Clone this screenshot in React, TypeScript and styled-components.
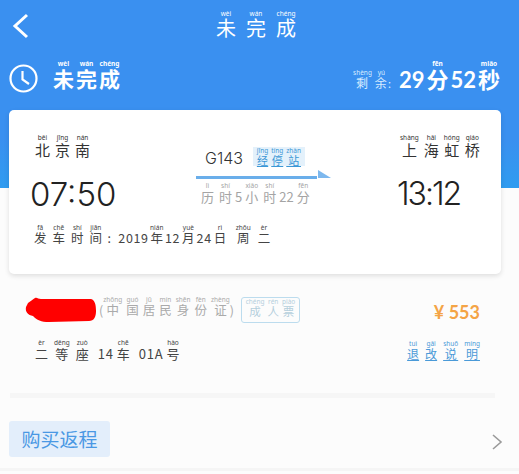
import React from "react";
import styled, { createGlobalStyle } from "styled-components";

const GlobalStyle = createGlobalStyle`
  html, body {
    margin: 0;
    padding: 0;
    background: #fcfcfc;
  }
  * {
    box-sizing: border-box;
  }
`;

const Page = styled.div`
  width: 519px;
  height: 474px;
  overflow: hidden;
  font-family: "Noto Sans CJK SC", "Noto Sans", sans-serif;
  background: linear-gradient(#3a90f0 0, #3a90f0 140px, #2f9cf0 188px, #fcfcfc 188px);
`;

const TopBar = styled.div`
  height: 52px;
  padding-left: 11px;
  display: flex;
  align-items: center;
  justify-content: flex-start;
  gap: 185px;
`;

const Title = styled.div`
  color: #fff;
  font-size: 20px;
  line-height: 34px;
  margin-top: 4px;
`;

const StatusRow = styled.div`
  height: 58px;
  padding: 8px 19px 0 9px;
  display: flex;
  align-items: flex-start;
  justify-content: space-between;
  color: #fff;
`;

const StatusLeft = styled.div`
  display: flex;
  align-items: center;
  gap: 15px;
  font-size: 21px;
  font-weight: 700;
  line-height: 34px;
`;

const Countdown = styled.div`
  display: flex;
  align-items: baseline;
  gap: 2px;
  font-size: 22px;
  font-weight: 700;
  line-height: 34px;
  font-family: "Lato", "Noto Sans CJK SC", sans-serif;
`;

const CountdownLabel = styled.span`
  font-size: 12px;
  font-weight: 400;
  color: #d8ecff;
  margin-right: 5px;
  letter-spacing: 1px;
`;

const Card = styled.div`
  width: 492px;
  height: 164px;
  margin-left: 9px;
  padding: 24px 25px 0 22px;
  background: #fff;
  border-radius: 5px;
  box-shadow: 0 2px 5px rgba(0, 0, 0, 0.12);
  color: #333;
`;

const RouteRow = styled.div`
  display: flex;
  justify-content: space-between;
  align-items: flex-start;
  height: 90px;
`;

const Station = styled.div<{ $right?: boolean }>`
  display: flex;
  flex-direction: column;
  align-items: flex-start;
  padding-left: 4px;
  width: ${(p) => (p.$right ? "80px" : "86px")};
`;

const StationName = styled.div`
  font-size: 15px;
  line-height: 26px;
  color: #333;
  white-space: nowrap;
`;

const Time = styled.div<{ $right?: boolean }>`
  margin-top: 13px;
  margin-left: ${(p) => (p.$right ? "-3px" : "-5px")};
  font-family: "Inter", sans-serif;
  font-size: ${(p) => (p.$right ? "32px" : "33px")};
  font-weight: 300;
  line-height: 34px;
  letter-spacing: ${(p) => (p.$right ? "-2px" : "0")};
  color: #222;
  white-space: nowrap;
`;

const Middle = styled.div`
  width: 135px;
  margin-left: 14px;
  padding-top: 11px;
  display: flex;
  flex-direction: column;
`;

const TrainRow = styled.div`
  display: flex;
  align-items: center;
  height: 22px;
  padding-left: 9px;
  gap: 10px;
`;

const TrainNo = styled.span`
  font-family: "Inter", sans-serif;
  font-size: 16px;
  font-weight: 300;
  color: #333;
  margin-top: 4px;
`;

const StopsTag = styled.span`
  width: 52px;
  height: 19px;
  background: #e4f1fb;
  color: #3b97d6;
  font-size: 11px;
  line-height: 19px;
  text-align: center;
  text-decoration: underline;
  white-space: nowrap;
`;

const Arrow = styled.svg`
  display: block;
  margin-top: 3px;
`;

const Duration = styled.div`
  margin: 2px 0 0 5px;
  font-size: 13px;
  line-height: 22px;
  color: #a4a4a4;
  white-space: nowrap;
`;

const Digits = styled.span`
  margin: 0 3px;
`;

const DepartLine = styled.div`
  margin-left: 3px;
  font-size: 12.5px;
  line-height: 24px;
  color: #444;
  white-space: nowrap;
`;

const DateDigits = styled.span`
  margin: 0 2px;
  letter-spacing: 0.6px;
`;

const Ticket = styled.div`
  height: 102px;
  margin: 22px 24px 0 10px;
  padding: 0 15px;
  border-bottom: 5px solid #f6f6f6;
`;

const TicketRow = styled.div`
  display: flex;
  align-items: center;
  justify-content: space-between;
`;

const Passenger = styled.div`
  display: flex;
  align-items: center;
`;

const IdType = styled.span`
  font-size: 12.5px;
  line-height: 26px;
  color: #aaa;
  white-space: nowrap;
`;

const Paren = styled.span`
  margin: 0 2px;
`;

const TicketKind = styled.span`
  width: 59px;
  height: 26px;
  margin-left: 5px;
  border: 1.5px solid #bcdcee;
  border-radius: 3px;
  color: #b5cfdc;
  font-size: 11.5px;
  line-height: 23px;
  text-align: center;
  white-space: nowrap;
`;

const Price = styled.span`
  margin-top: 4px;
  font-family: "Lato", sans-serif;
  font-size: 18px;
  font-weight: 700;
  color: #f4a446;
`;

const SeatRow = styled(TicketRow)`
  margin-top: 15px;
  padding-left: 10px;
`;

const Seat = styled.span`
  font-size: 13px;
  line-height: 22px;
  color: #444;
  white-space: nowrap;
`;

const SeatDigits = styled.span`
  margin: 0 3px 0 9px;
  letter-spacing: 0.8px;
`;

const RefundLink = styled.span`
  font-size: 12px;
  line-height: 22px;
  color: #4a9ad8;
  text-decoration: underline;
  white-space: nowrap;
`;

const ReturnRow = styled.div`
  height: 73px;
  padding: 23px 16px 0 9px;
  display: flex;
  justify-content: space-between;
  align-items: flex-start;
  border-bottom: 3px solid #f5f5f5;
`;

const ReturnButton = styled.div`
  width: 101px;
  height: 36px;
  background: #e3eefb;
  border-radius: 3px;
  color: #4a98e4;
  font-size: 19px;
  line-height: 36px;
  text-align: center;
`;

const Chevron = styled.svg`
  margin-top: 12px;
`;

// latin primary font keeps the annotation close to the han glyph
const Char = styled.ruby<{ $gap: number }>`
  font-family: "Liberation Sans", "Noto Sans CJK SC", sans-serif;
  margin-right: ${(p) => p.$gap}px;
`;

const Rt = styled.rt`
  font-size: 6.5px;
  font-weight: inherit;
  line-height: 7px;
  letter-spacing: 0;
  font-family: "Noto Sans", sans-serif;
`;

const Py: React.FC<{ items: [string, string][]; gap?: number }> = ({ items, gap = 0 }) => (
  <>
    {items.map(([han, pin], i) => (
      <Char key={i} $gap={i < items.length - 1 ? gap : 0}>
        {han}
        <Rt>{pin}</Rt>
      </Char>
    ))}
  </>
);

const App: React.FC = () => {
  return (
    <Page>
      <GlobalStyle />
      <TopBar>
        <svg width="20" height="26" viewBox="0 0 20 26" fill="none">
          <path d="M16 2 L4 13 L16 24" stroke="#fff" strokeWidth="3" />
        </svg>
        <Title>
          <Py
            gap={10}
            items={[
              ["未", "wèi"],
              ["完", "wán"],
              ["成", "chéng"],
            ]}
          />
        </Title>
      </TopBar>
      <StatusRow>
        <StatusLeft>
          <svg width="29" height="29" viewBox="0 0 29 29" fill="none" stroke="#fff" strokeWidth="2.2">
            <circle cx="14.5" cy="14.5" r="13" />
            <path d="M13.5 7 V15.5 L20 20" />
          </svg>
          <span>
            <Py
              gap={2}
              items={[
                ["未", "wèi"],
                ["完", "wán"],
                ["成", "chéng"],
              ]}
            />
          </span>
        </StatusLeft>
        <Countdown>
          <CountdownLabel>
            <Py
              gap={3}
              items={[
                ["剩", "shèng"],
                ["余", "yú"],
              ]}
            />
            :
          </CountdownLabel>
          <span>29</span>
          <Py items={[["分", "fēn"]]} />
          <span>52</span>
          <Py items={[["秒", "miǎo"]]} />
        </Countdown>
      </StatusRow>
      <Card>
        <RouteRow>
          <Station>
            <StationName>
              <Py
                gap={5}
                items={[
                  ["北", "běi"],
                  ["京", "jīng"],
                  ["南", "nán"],
                ]}
              />
            </StationName>
            <Time>07:50</Time>
          </Station>
          <Middle>
            <TrainRow>
              <TrainNo>G143</TrainNo>
              <StopsTag>
                <Py
                  gap={3}
                  items={[
                    ["经", "jīng"],
                    ["停", "tíng"],
                    ["站", "zhàn"],
                  ]}
                />
              </StopsTag>
            </TrainRow>
            <Arrow width="135" height="10" viewBox="0 0 135 10">
              <rect x="0" y="6" width="121" height="3" fill="#6aaeea" />
              <path d="M122 0 L135 8 L122 8 Z" fill="#7db8ee" />
            </Arrow>
            <Duration>
              <Py
                gap={5}
                items={[
                  ["历", "lì"],
                  ["时", "shí"],
                ]}
              />
              <Digits>5</Digits>
              <Py
                gap={5}
                items={[
                  ["小", "xiǎo"],
                  ["时", "shí"],
                ]}
              />
              <Digits>22</Digits>
              <Py items={[["分", "fēn"]]} />
            </Duration>
          </Middle>
          <Station $right>
            <StationName>
              <Py
                gap={5}
                items={[
                  ["上", "shàng"],
                  ["海", "hǎi"],
                  ["虹", "hóng"],
                  ["桥", "qiáo"],
                ]}
              />
            </StationName>
            <Time $right>13:12</Time>
          </Station>
        </RouteRow>
        <DepartLine>
          <Py
            gap={6}
            items={[
              ["发", "fā"],
              ["车", "chē"],
              ["时", "shí"],
              ["间", "jiān"],
            ]}
          />
          <DateDigits>&nbsp;:&nbsp;&nbsp;2019</DateDigits>
          <Py items={[["年", "nián"]]} />
          <DateDigits>12</DateDigits>
          <Py items={[["月", "yuè"]]} />
          <DateDigits>24</DateDigits>
          <Py items={[["日", "rì"]]} />
          <DateDigits>&nbsp;&nbsp;</DateDigits>
          <Py
            gap={7}
            items={[
              ["周", "zhōu"],
              ["二", "èr"],
            ]}
          />
        </DepartLine>
      </Card>
      <Ticket>
        <TicketRow>
          <Passenger>
            <svg width="72" height="26" viewBox="0 0 72 26">
              <path
                d="M3 6 C6 4 8 2 10 1 C12 0 13 2 16 2 L66 2 C70 3 71 8 71 14 C71 20 69 24 64 24 L24 25 C16 25 12 23 8 19 C3 18 0 15 1 10 Z"
                fill="#ff0000"
              />
            </svg>
            <IdType>
              <Paren>(</Paren>
              <Py
                gap={4}
                items={[
                  ["中", "zhōng"],
                  ["国", "guó"],
                  ["居", "jū"],
                  ["民", "mín"],
                  ["身", "shēn"],
                  ["份", "fèn"],
                  ["证", "zhèng"],
                ]}
              />
              <Paren>)</Paren>
            </IdType>
            <TicketKind>
              <Py
                gap={3}
                items={[
                  ["成", "chéng"],
                  ["人", "rén"],
                  ["票", "piào"],
                ]}
              />
            </TicketKind>
          </Passenger>
          <Price>¥ 553</Price>
        </TicketRow>
        <SeatRow>
          <Seat>
            <Py
              gap={6}
              items={[
                ["二", "èr"],
                ["等", "děng"],
                ["座", "zuò"],
              ]}
            />
            <SeatDigits>14</SeatDigits>
            <Py items={[["车", "chē"]]} />
            <SeatDigits>01A</SeatDigits>
            <Py items={[["号", "hào"]]} />
          </Seat>
          <RefundLink>
            <Py
              gap={6}
              items={[
                ["退", "tuì"],
                ["改", "gǎi"],
                ["说", "shuō"],
                ["明", "míng"],
              ]}
            />
          </RefundLink>
        </SeatRow>
      </Ticket>
      <ReturnRow>
        <ReturnButton>购买返程</ReturnButton>
        <Chevron width="12" height="18" viewBox="0 0 12 18" fill="none">
          <path d="M2 2 L10 9 L2 16" stroke="#9a9a9a" strokeWidth="1.6" />
        </Chevron>
      </ReturnRow>
    </Page>
  );
};

export default App;
